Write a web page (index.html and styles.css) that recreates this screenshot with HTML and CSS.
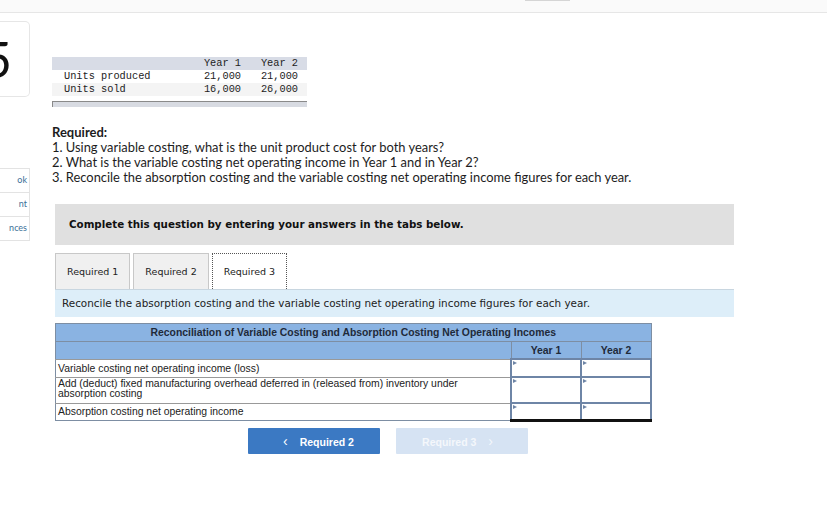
FILE: index.html
```html
<!DOCTYPE html>
<html lang="en">
<head>
<meta charset="UTF-8">
<meta name="viewport" content="width=device-width, initial-scale=1.0">
<title>Variable Costing Reconciliation</title>
<link rel="stylesheet" href="styles.css">
</head>
<body>

<div class="topbar"><div class="topbar-tab"></div></div>

<div class="page">
    <div class="side">
        <div class="num-card"><span class="num">5</span></div>
        <ul class="side-links">
            <li>ok</li>
            <li>nt</li>
            <li>nces</li>
        </ul>
    </div>

    <div class="main">
        <table class="data">
            <tr class="data-head">
                <td class="lbl"></td>
                <td>Year 1</td>
                <td>Year 2</td>
            </tr>
            <tr>
                <td class="lbl">Units produced</td>
                <td>21,000</td>
                <td>21,000</td>
            </tr>
            <tr class="shade">
                <td class="lbl">Units sold</td>
                <td>16,000</td>
                <td>26,000</td>
            </tr>
        </table>
        <div class="data-foot"></div>

        <div class="required">
            <strong>Required:</strong>
            <p>1. Using variable costing, what is the unit product cost for both years?</p>
            <p>2. What is the variable costing net operating income in Year 1 and in Year 2?</p>
            <p>3. Reconcile the absorption costing and the variable costing net operating income figures for each year.</p>
        </div>

        <div class="work">
            <div class="notice">Complete this question by entering your answers in the tabs below.</div>

            <div class="tabs">
                <div class="tab">Required 1</div>
                <div class="tab">Required 2</div>
                <div class="tab active">Required 3</div>
            </div>
            <div class="instr">Reconcile the absorption costing and the variable costing net operating income figures for each year.</div>

            <table class="recon">
                <tr class="title-row">
                    <th colspan="3">Reconciliation of Variable Costing and Absorption Costing Net Operating Incomes</th>
                </tr>
                <tr class="year-row">
                    <th></th>
                    <th class="yr">Year 1</th>
                    <th class="yr">Year 2</th>
                </tr>
                <tr class="r1">
                    <td class="desc">Variable costing net operating income (loss)</td>
                    <td class="cell"><input type="text"></td>
                    <td class="cell"><input type="text"></td>
                </tr>
                <tr class="r2">
                    <td class="desc">Add (deduct) fixed manufacturing overhead deferred in (released from) inventory under absorption costing</td>
                    <td class="cell"><input type="text"></td>
                    <td class="cell"><input type="text"></td>
                </tr>
                <tr class="r3">
                    <td class="desc">Absorption costing net operating income</td>
                    <td class="cell total"><input type="text"></td>
                    <td class="cell total"><input type="text"></td>
                </tr>
            </table>

            <div class="nav">
                <button type="button" class="btn prev"><span class="chev">&lsaquo;</span> Required 2</button>
                <button type="button" class="btn next">Required 3 <span class="chev">&rsaquo;</span></button>
            </div>
        </div>
    </div>
</div>

</body>
</html>
```

FILE: styles.css
```css
body {
    margin: 0;
    padding: 0;
    background-color: #fff;
    font-family: Lato, "Liberation Sans", sans-serif;
    color: #222;
}

.topbar {
    height: 12px;
    background-color: #fafafa;
    border-bottom: 1px solid #e6e6e6;
}

.topbar-tab {
    margin-left: 525px;
    width: 45px;
    height: 1px;
    background-color: #d5d5d5;
}

.page {
    display: flex;
}

/* left strip, mostly cut off */
.side {
    width: 30px;
    flex-shrink: 0;
}

.num-card {
    margin-top: 8px;
    height: 74px;
    width: 29px;
    border: 1px solid #e6e6e6;
    border-left: none;
    border-radius: 0 5px 5px 0;
    overflow: hidden;
    display: flex;
    align-items: center;
    justify-content: flex-end;
}

.num {
    font-family: Lato, sans-serif;
    font-size: 50px;
    color: #111;
    margin-right: 17px;
    line-height: 1;
}

.side-links {
    list-style: none;
    margin: 71px 0 0 0;
    padding: 0;
    border: 1px solid #e3e3e3;
    border-left: none;
}

.side-links li {
    height: 23px;
    line-height: 22px;
    font-size: 9px;
    color: #3c6f98;
    text-align: right;
    padding-right: 2px;
    border-top: 1px solid #e3e3e3;
    white-space: nowrap;
    overflow: hidden;
    direction: rtl;
}

.side-links li:first-child {
    border-top: none;
}

.main {
    padding-left: 22px;
    flex: 1;
}

/* given data */
.data {
    margin-top: 44px;
    width: 255px;
    border-collapse: collapse;
    table-layout: fixed;
    font-family: "Liberation Mono", monospace;
    font-size: 10.3px;
    color: #222;
}

.data td {
    height: 13px;
    padding: 0;
    line-height: 13px;
    text-align: right;
    padding-right: 9px;
    width: 48px;
}

.data td.lbl {
    text-align: left;
    padding-left: 12px;
    padding-right: 0;
    width: 129px;
}

.data-head {
    background-color: #d8dce6;
}

.data .shade {
    background-color: #f4f4f4;
}

.data-foot {
    margin-top: 5px;
    width: 254px;
    height: 5px;
    background-color: #d8dbe2;
    border-top: 1px solid #8a8a8a;
    border-left: 1px solid #8a8a8a;
}

.required {
    margin-top: 18px;
    font-size: 12.9px;
    line-height: 15px;
    color: #1d1d1d;
}

.required strong {
    display: block;
    font-size: 13px;
}

.required p {
    margin: 0;
}

.work {
    margin-left: 3px;
    width: 679px;
}

.notice {
    margin-top: 19px;
    height: 41px;
    line-height: 41px;
    background-color: #e0e0e0;
    padding-left: 14px;
    font-family: "DejaVu Sans", Verdana, sans-serif;
    font-weight: bold;
    font-size: 10.3px;
    color: #111;
}

.tabs {
    display: flex;
    gap: 3px;
    margin-top: 8px;
}

.tab {
    height: 35px;
    line-height: 36px;
    padding: 0 11px;
    background-color: #f0f0f0;
    border: 1px solid #c8c8c8;
    border-bottom: none;
    font-family: "DejaVu Sans", Verdana, sans-serif;
    font-size: 9.5px;
    color: #222;
}

.tab.active {
    background-color: #fff;
    border: 1px dotted #555;
    border-bottom: none;
}

.instr {
    height: 27px;
    line-height: 27px;
    background-color: #ddeef9;
    border-top: 1px solid #c8d6e0;
    padding-left: 7px;
    font-family: "DejaVu Sans", Verdana, sans-serif;
    font-size: 10.4px;
    color: #222;
}

.recon {
    margin-top: 6px;
    width: 597px;
    border-collapse: collapse;
    font-family: "Liberation Sans", Arial, sans-serif;
    font-size: 10.4px;
    color: #222;
    border: 1px solid #7d8ea3;
}

.recon th {
    background-color: #8ab3e2;
    font-weight: bold;
    padding: 0;
    color: #1f2a3a;
}

.title-row th {
    height: 17px;
    font-size: 10.4px;
    border-bottom: 1px solid #7d8ea3;
}

.year-row th {
    height: 16px;
}

.year-row th.yr {
    width: 69px;
    border-left: 1px solid #7d8ea3;
    font-size: 10.4px;
}

.recon td.desc {
    padding: 1px 48px 0 2px;
    border-top: 1px solid #999;
    line-height: 10px;
    vertical-align: middle;
}

.r1 td.desc {
    height: 13px;
    padding-top: 4px;
    vertical-align: top;
}

.r2 td.desc {
    height: 24px;
    vertical-align: top;
}

.r3 td.desc {
    height: 12px;
}

.recon td.cell {
    position: relative;
    padding: 0;
    border: 2px solid #6e85a6;
    background-color: #fff;
}

.recon td.cell::before {
    content: "";
    position: absolute;
    left: 1px;
    top: 1px;
    border-left: 4px solid #6e85a6;
    border-top: 2px solid transparent;
    border-bottom: 2px solid transparent;
}

.recon td.cell input {
    display: block;
    width: 100%;
    height: 100%;
    box-sizing: border-box;
    border: none;
    padding: 0;
    background: transparent;
}

.recon td.total {
    border-bottom: 3px solid #111;
}

.nav {
    display: flex;
    justify-content: center;
    gap: 16px;
    margin-top: 6px;
    padding-right: 13px;
}

.btn {
    width: 132px;
    height: 26px;
    border: none;
    border-radius: 1px;
    font-family: "Liberation Sans", Arial, sans-serif;
    font-weight: bold;
    font-size: 10.5px;
    color: #fff;
    cursor: pointer;
}

.btn.prev {
    background-color: #3b79c3;
}

.btn.next {
    background-color: #d6e3f3;
    color: #f4f7fb;
}

.chev {
    font-size: 14px;
    font-weight: normal;
    margin: 0 9px;
}
```
